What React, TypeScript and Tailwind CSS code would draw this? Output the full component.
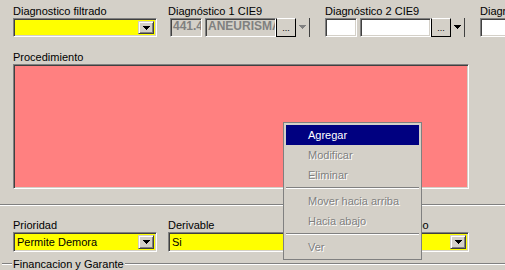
import React from 'react';

const sunken =
  'border border-t-[#808080] border-l-[#808080] border-b-white border-r-white shadow-[inset_1px_1px_0_#404040,inset_-1px_-1px_0_#d4d0c8]';
const raised =
  'border border-t-[#d4d0c8] border-l-[#d4d0c8] border-b-[#404040] border-r-[#404040] shadow-[inset_1px_1px_0_#fff,inset_-1px_-1px_0_#808080]';

const Arrow = ({ disabled = false }: { disabled?: boolean }) => (
  <svg width="7" height="4" viewBox="0 0 7 4" shapeRendering="crispEdges">
    <path d="M0 0h7L3.5 4z" fill={disabled ? '#808080' : '#000'} />
  </svg>
);

const Combo = ({ width, height, value }: { width: string; height: string; value?: string }) => (
  <div className={`${sunken} ${width} ${height} flex bg-[#ffff00] p-[2px]`}>
    <div className="flex-1 overflow-hidden whitespace-nowrap pl-[1px] leading-[15px]">{value}</div>
    <div className={`${raised} flex w-[16px] items-center justify-center bg-[#d4d0c8]`}>
      <Arrow />
    </div>
  </div>
);

const CodePicker = ({ disabled, code, name }: { disabled?: boolean; code?: string; name?: string }) => (
  <div className="flex h-[19px] items-stretch">
    <div className={`${sunken} w-[32px] overflow-hidden whitespace-nowrap px-[2px] text-[12px] font-bold leading-[15px] ${disabled ? 'bg-[#d4d0c8] text-[#808080]' : 'bg-white'}`}>
      {code}
    </div>
    <div className={`${sunken} ml-[3px] w-[71px] overflow-hidden whitespace-nowrap px-[2px] text-[12px] font-bold leading-[15px] ${disabled ? 'bg-[#d4d0c8] text-[#808080]' : 'bg-white'}`}>
      {name}
    </div>
    <div className="flex border-r border-r-[#404040]">
      <div className="flex w-[20px] items-end justify-center border border-black border-t-white bg-[#d4d0c8] pb-[3px] text-[9px] leading-none">
        ...
      </div>
      <div className="flex w-[13px] items-center justify-center bg-[#d4d0c8] pb-[2px]">
        <Arrow disabled={disabled} />
      </div>
    </div>
  </div>
);

const MenuItem = ({ label, active = false }: { label: string; active?: boolean }) => (
  <div className={`flex h-[20px] items-center pl-[22px] ${active ? 'bg-[#000080] text-white' : 'text-[#808080] [text-shadow:1px_1px_0_#fff]'}`}>
    {label}
  </div>
);

const MenuSeparator = () => (
  <div className="flex h-[6px] items-center">
    <div className="w-full border-t border-b border-t-[#808080] border-b-white" />
  </div>
);

export default function App() {
  return (
    <div className="relative h-[270px] w-[505px] overflow-hidden bg-[#d4d0c8] font-['Liberation_Sans',Arial,sans-serif] text-[11px] leading-none text-black">
      {/* Diagnosticos */}
      <div className="flex pl-[13px] pt-[4px]">
        <div className="w-[144px] shrink-0">
          <div className="h-[14px] leading-[14px]">Diagnostico filtrado</div>
          <Combo width="w-[144px]" height="h-[19px]" />
        </div>
        <div className="ml-[11px] w-[143px] shrink-0">
          <div className="h-[14px] leading-[14px]">Diagnóstico 1 CIE9</div>
          <div className="pl-[2px]">
            <CodePicker disabled code="441.4" name="ANEURISMA" />
          </div>
        </div>
        <div className="ml-[14px] w-[143px] shrink-0">
          <div className="h-[14px] leading-[14px]">Diagnóstico 2 CIE9</div>
          <CodePicker />
        </div>
        <div className="ml-[12px] w-[60px] shrink-0">
          <div className="h-[14px] whitespace-nowrap leading-[14px]">Diagnóstico 3 CIE9</div>
          <div className={`${sunken} h-[19px] w-[40px] bg-white`} />
        </div>
      </div>

      {/* Procedimiento */}
      <div className="mt-[13px] pl-[13px]">
        <div className="h-[14px] leading-[14px]">Procedimiento</div>
        <div className={`${sunken} h-[125px] w-[456px] bg-[#ff8080]`} />
      </div>

      <div className="mt-[15px] border-t border-b border-t-[#808080] border-b-white" />

      {/* Prioridad / Derivable */}
      <div className="mt-[12px] flex pl-[13px]">
        <div className="w-[144px] shrink-0">
          <div className="h-[14px] leading-[14px]">Prioridad</div>
          <Combo width="w-[144px]" height="h-[20px]" value="Permite Demora" />
        </div>
        <div className="ml-[11px] w-[201px] shrink-0">
          <div className="h-[14px] leading-[14px]">Derivable</div>
          <Combo width="w-[201px]" height="h-[20px]" value="Si" />
        </div>
        <div className="ml-[10px] w-[90px] shrink-0">
          <div className="h-[14px] leading-[14px]">Con Cupo</div>
          <Combo width="w-[90px]" height="h-[20px]" />
        </div>
      </div>

      {/* Financiacion y Garante */}
      <div className="mt-[5px] flex h-[14px] items-center">
        <div className="ml-[2px] w-[10px] border-t border-b border-t-[#808080] border-b-white" />
        <div className="px-[1px] leading-[14px]">Financacion y Garante</div>
        <div className="flex-1 border-t border-b border-t-[#808080] border-b-white" />
      </div>

      {/* Context menu */}
      <div className="absolute left-[283px] top-[122px] w-[139px] border border-[#808080] bg-[#d4d0c8] p-[2px]">
        <MenuItem label="Agregar" active />
        <MenuItem label="Modificar" />
        <MenuItem label="Eliminar" />
        <MenuSeparator />
        <MenuItem label="Mover hacia arriba" />
        <MenuItem label="Hacia abajo" />
        <MenuSeparator />
        <MenuItem label="Ver" />
      </div>
    </div>
  );
}
